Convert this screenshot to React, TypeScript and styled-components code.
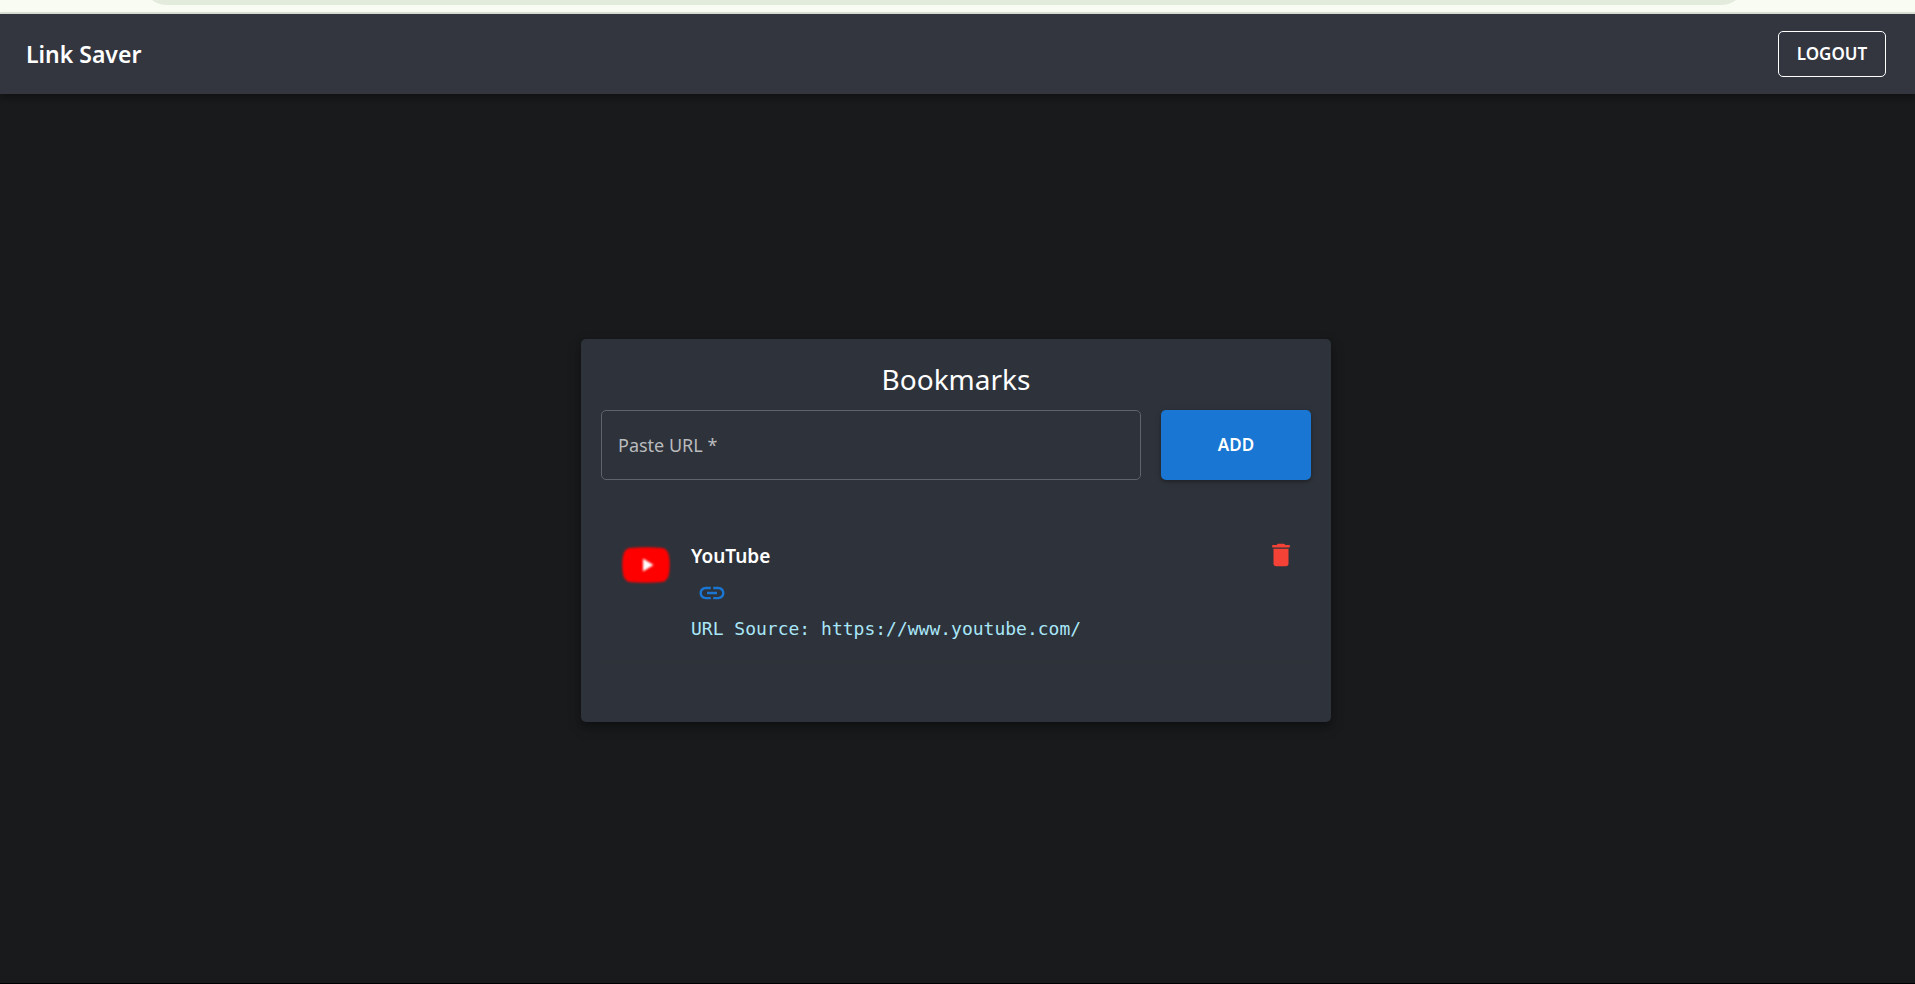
import React, { useState } from "react";
import styled, { createGlobalStyle } from "styled-components";
import { MdDelete, MdLink } from "react-icons/md";

const GlobalStyle = createGlobalStyle`
  *, *::before, *::after { box-sizing: border-box; }
  body {
    margin: 0;
    background: #191a1c;
    color: #fff;
    font-family: "Noto Sans", "Open Sans", sans-serif;
  }
`;

const Page = styled.div`
  display: flex;
  flex-direction: column;
  min-height: 100vh;
  border-bottom: 1px solid #000;
`;

const BrowserStrip = styled.div`
  height: 14px;
  padding: 0 171px 0 144px;
  overflow: hidden;
  background: #f8fcf2;
  border-bottom: 2px solid #dde4d8;
`;

const AddressBar = styled.div`
  height: 44px;
  margin-top: -39px;
  border-radius: 22px;
  background: #e3ebdc;
`;

const Header = styled.header`
  display: flex;
  align-items: center;
  justify-content: space-between;
  height: 80px;
  padding: 0 29px 0 26px;
  background: #33363f;
  box-shadow: 0 2px 5px rgba(0, 0, 0, 0.2), 0 5px 6px rgba(0, 0, 0, 0.14);
`;

const Brand = styled.h1`
  margin: 0;
  font-size: 23px;
  font-weight: 600;
  line-height: 40px;
`;

const Button = styled.button<{ $filled?: boolean }>`
  flex: none;
  width: ${(p) => (p.$filled ? "150px" : "108px")};
  height: ${(p) => (p.$filled ? "70px" : "46px")};
  padding: 0;
  border: ${(p) => (p.$filled ? "none" : "1px solid #fff")};
  border-radius: 5px;
  background: ${(p) => (p.$filled ? "#1976d2" : "transparent")};
  box-shadow: ${(p) =>
    p.$filled ? "0 2px 3px rgba(0, 0, 0, 0.2), 0 1px 6px rgba(0, 0, 0, 0.14)" : "none"};
  color: #fff;
  font: 600 17px/30px "Noto Sans", "Open Sans", sans-serif;
  text-transform: uppercase;
  cursor: pointer;
`;

const Main = styled.main`
  flex: 1;
  display: flex;
  align-items: center;
  justify-content: center;
  padding: 20px 23px 36px 20px;
`;

const Card = styled.section`
  width: 100%;
  max-width: 750px;
  padding: 20px 20px 60px;
  border-radius: 5px;
  background: #2e323a;
  box-shadow: 0 4px 6px rgba(0, 0, 0, 0.2), 0 5px 14px rgba(0, 0, 0, 0.24);
`;

const Title = styled.h2`
  margin: 0 0 10px;
  font-size: 28px;
  font-weight: 400;
  line-height: 41px;
  text-align: center;
`;

const AddForm = styled.form`
  display: flex;
  gap: 20px;
`;

const UrlInput = styled.input`
  flex: 1;
  min-width: 0;
  height: 70px;
  padding: 0 16px;
  border: 1px solid #5f636a;
  border-radius: 5px;
  background: transparent;
  color: #fff;
  font: 400 18px/30px "Noto Sans", "Open Sans", sans-serif;

  &::placeholder {
    color: #b9bbbd;
    opacity: 1;
  }
`;

const List = styled.ul`
  margin: 40px 0 0;
  padding: 0;
  list-style: none;
`;

const Item = styled.li`
  display: flex;
  align-items: flex-start;
  gap: 20px;
  padding: 20px 5px 17px 20px;
  border-bottom: 1px solid #303236;
`;

const Thumb = styled.svg`
  flex: none;
  display: block;
  width: 50px;
  height: 50px;
`;

const Details = styled.div`
  flex: 1;
  min-width: 0;
`;

const ItemTitle = styled.h3`
  margin: 0;
  font-size: 19px;
  font-weight: 600;
  line-height: 32px;
`;

const OpenLink = styled.a`
  display: flex;
  width: 42px;
  padding: 6px;
  color: #1976d2;
`;

const Source = styled.p`
  margin: 0;
  color: #a8e6f8;
  font: 400 18px/30px "DejaVu Sans Mono", monospace;
  overflow-wrap: anywhere;
`;

const DeleteButton = styled.button`
  display: flex;
  flex: none;
  padding: 0 10px;
  border: none;
  background: transparent;
  color: #f44336;
  cursor: pointer;
`;

function YouTubeThumb() {
  return (
    <Thumb viewBox="0 0 50 50" role="img" aria-label="YouTube logo">
      <defs>
        <filter id="soft" x="-10%" y="-10%" width="120%" height="120%">
          <feGaussianBlur stdDeviation="1.2" />
        </filter>
      </defs>
      <path
        d="M9 8Q25 6.500 41 8Q45.500 8.500 47.500 14Q50 25 47.500 36Q45.500 41.500 41 42Q25 43.500 9 42Q4.500 41.500 2.500 36Q0 25 2.500 14Q4.500 8.500 9 8Z"
        fill="#f00"
        filter="url(#soft)"
      />
      <path d="M22 18.500V31.500L32.500 25Z" fill="#fff" filter="url(#soft)" />
    </Thumb>
  );
}

const bookmarks = [{ title: "YouTube", url: "https://www.youtube.com/" }];

export default function App() {
  const [url, setUrl] = useState("");

  return (
    <>
      <GlobalStyle />
      <Page>
        <BrowserStrip>
          <AddressBar />
        </BrowserStrip>
        <Header>
          <Brand>Link Saver</Brand>
          <Button type="button">Logout</Button>
        </Header>
        <Main>
          <Card>
            <Title>Bookmarks</Title>
            <AddForm onSubmit={(e) => e.preventDefault()}>
              <UrlInput
                type="url"
                required
                aria-label="Paste URL"
                placeholder="Paste URL *"
                value={url}
                onChange={(e) => setUrl(e.target.value)}
              />
              <Button type="submit" $filled>
                Add
              </Button>
            </AddForm>
            <List>
              {bookmarks.map((b) => (
                <Item key={b.url}>
                  <YouTubeThumb />
                  <Details>
                    <ItemTitle>{b.title}</ItemTitle>
                    <OpenLink href={b.url} aria-label={`Open ${b.title}`}>
                      <MdLink size={30} />
                    </OpenLink>
                    <Source>URL Source: {b.url}</Source>
                  </Details>
                  <DeleteButton type="button" aria-label={`Delete ${b.title}`}>
                    <MdDelete size={30} />
                  </DeleteButton>
                </Item>
              ))}
            </List>
          </Card>
        </Main>
      </Page>
    </>
  );
}
